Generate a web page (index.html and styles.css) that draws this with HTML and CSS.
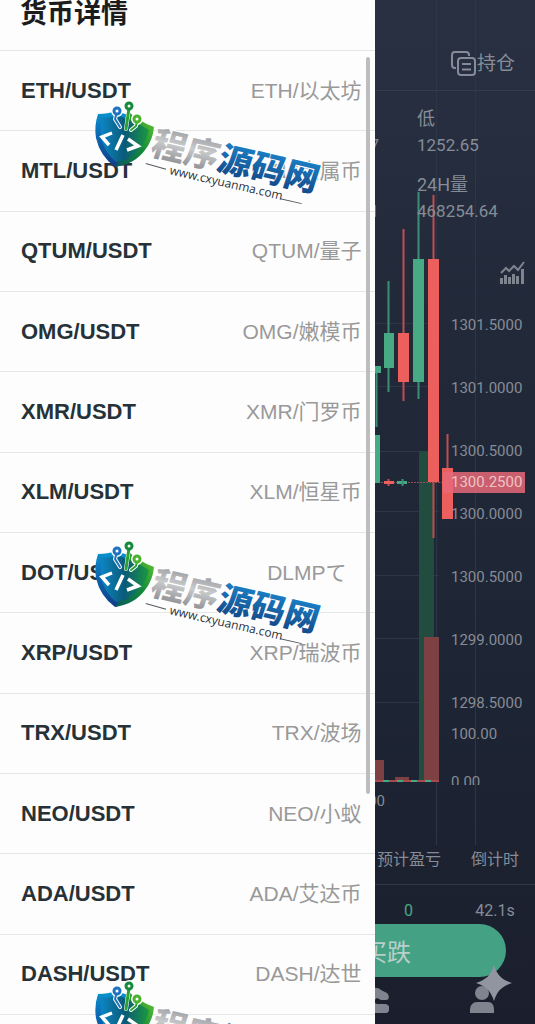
FILE: index.html
```html
<!DOCTYPE html>
<html lang="zh-CN">
<head>
    <meta charset="UTF-8">
    <meta name="viewport" content="width=device-width, initial-scale=1.0">
    <title>货币详情</title>
    <link rel="stylesheet" href="styles.css">
</head>
<body>
    <div class="app">
        <main class="trade">
            <!-- K线图 -->
            <svg class="kline" viewBox="375 0 160 850" width="160" height="850" aria-hidden="true">
                <g class="grid">
                    <path d="M436.5 0V845M475.5 0V845"/>
                    <path d="M375 323.5H439M375 386.5H439M375 451.5H439M375 511.5H439M375 575.5H439M375 638.5H439M375 702.5H439"/>
                </g>
                <rect class="vol-up" x="419" y="451" width="15" height="330"/>
                <rect class="vol-down" x="424" y="637" width="15" height="144"/>
                <rect class="vol-down" x="375" y="760" width="9" height="21"/>
                <rect class="vol-down" x="395" y="777" width="14" height="3"/>
                <path class="base" d="M375 781H439"/>
                <path class="base-down" d="M375 781H439"/>
                <path class="last" d="M375 482.5H443"/>
                <g class="up">
                    <path d="M376.5 366V427M388.5 281V392M418.5 192V399"/>
                    <rect x="370" y="366" width="11" height="7"/>
                    <rect x="370" y="435" width="10" height="48"/>
                    <rect x="384" y="333" width="10" height="35"/>
                    <rect x="413" y="259" width="11" height="123"/>
                    <rect x="397" y="481" width="10" height="3"/>
                    <path d="M402.5 479V486"/>
                </g>
                <g class="down">
                    <path d="M403.5 229V401M433.5 195V538M447.5 434V470M388.5 479V486"/>
                    <rect x="398" y="333" width="11" height="49"/>
                    <rect x="428" y="259" width="11" height="223"/>
                    <rect x="442" y="468" width="11" height="51"/>
                    <rect x="384" y="481" width="10" height="3"/>
                </g>
            </svg>

            <header class="trade-header">
                <button class="hold-btn" type="button">
                    <svg width="26" height="26" viewBox="0 0 26 26" aria-hidden="true">
                        <path d="M5 17H4a3 3 0 0 1-3-3V4a3 3 0 0 1 3-3h11a3 3 0 0 1 3 3v1"/>
                        <rect x="7" y="7" width="17" height="17" rx="3"/>
                        <path d="M11 13h9M11 18.500h9"/>
                    </svg>
                    <span>持仓</span>
                </button>
            </header>

            <dl class="stats">
                <div class="stat stat-left"><dt></dt><dd>7</dd></div>
                <div class="stat"><dt>低</dt><dd>1252.65</dd></div>
                <div class="stat stat-left"><dt></dt><dd>1</dd></div>
                <div class="stat"><dt>24H量</dt><dd>468254.64</dd></div>
            </dl>

            <section class="chart">
                <button class="indicator-btn" type="button" aria-label="指标">
                    <svg width="26" height="24" viewBox="0 0 26 24" aria-hidden="true">
                        <path class="line" d="M2 12l5-5 3 3 5-5 4 4 6-8"/>
                        <path class="bars" d="M2.500 23v-6M6.500 23v-9M10.500 23v-7M14.500 23v-10M18.500 23v-8M23.500 23V8"/>
                    </svg>
                </button>
                <ul class="axis">
                    <li>1301.5000</li>
                    <li>1301.0000</li>
                    <li>1300.5000</li>
                    <li>1300.0000</li>
                    <li>1300.5000</li>
                    <li>1299.0000</li>
                    <li>1298.5000</li>
                </ul>
                <ul class="axis-vol">
                    <li>100.00</li>
                    <li class="cut">0.00</li>
                </ul>
                <div class="price-tag">1300.2500</div>
                <div class="time">00</div>
            </section>

            <table class="orders">
                <thead>
                    <tr><th>预计盈亏</th><th class="count">倒计时</th></tr>
                </thead>
                <tbody>
                    <tr><td class="profit">0</td><td class="count">42.1s</td></tr>
                </tbody>
            </table>

            <div class="actions">
                <button class="sell-btn" type="button">买跌</button>
            </div>

            <nav class="tabbar">
                <a href="#" aria-label="资产">
                    <svg width="28" height="28" viewBox="0 0 28 28" aria-hidden="true">
                        <path d="M2 11L9 4c3-3 8-3 11 0l6 3c3 3 2 7-1 7h-5l-4-2-5 4H4z"/>
                        <path d="M1 18h7l4-2 4 2h8c6 0 6 9 0 9H1z"/>
                    </svg>
                </a>
                <a href="#" aria-label="我的">
                    <svg width="28" height="28" viewBox="0 0 28 28" aria-hidden="true">
                        <circle cx="14" cy="7" r="7"/>
                        <path d="M2 27v-3c0-5 3-8 7-8h11c4 0 6 3 6 8v3z"/>
                    </svg>
                </a>
            </nav>

            <svg class="sparkle" width="36" height="36" viewBox="0 0 36 36" aria-hidden="true">
                <path d="M18 0C21 10 26 15 36 18C26 21 21 26 18 36C15 26 10 21 0 18C10 15 15 10 18 0z"/>
            </svg>
        </main>

        <aside class="drawer">
            <h1>货币详情</h1>
            <ul class="coins">
                <li><b>ETH/USDT</b><span>ETH/以太坊</span></li>
                <li><b>MTL/USDT</b><span>MTL/金属币</span></li>
                <li><b>QTUM/USDT</b><span>QTUM/量子</span></li>
                <li><b>OMG/USDT</b><span>OMG/嫩模币</span></li>
                <li><b>XMR/USDT</b><span>XMR/门罗币</span></li>
                <li><b>XLM/USDT</b><span>XLM/恒星币</span></li>
                <li class="short"><b>DOT/USDT</b><span>DLMPて</span></li>
                <li><b>XRP/USDT</b><span>XRP/瑞波币</span></li>
                <li><b>TRX/USDT</b><span>TRX/波场</span></li>
                <li><b>NEO/USDT</b><span>NEO/小蚁</span></li>
                <li><b>ADA/USDT</b><span>ADA/艾达币</span></li>
                <li><b>DASH/USDT</b><span>DASH/达世</span></li>
            </ul>
            <div class="scrollbar"></div>
        </aside>

        <!-- 水印 -->
        <div class="marks">
            <svg class="mark" viewBox="0 0 240 110" width="240" height="110">
                <defs>
                    <linearGradient id="blue" x1="0" y1="0" x2="0" y2="1">
                        <stop offset="0" stop-color="#0a93cf"/>
                        <stop offset="0.500" stop-color="#0b63b0"/>
                        <stop offset="1" stop-color="#123c86"/>
                    </linearGradient>
                    <linearGradient id="green" x1="1" y1="0" x2="0" y2="1">
                        <stop offset="0" stop-color="#6acb2c"/>
                        <stop offset="0.500" stop-color="#128a3c"/>
                        <stop offset="1" stop-color="#0a5560"/>
                    </linearGradient>
                    <linearGradient id="inner" x1="0" y1="0" x2="1" y2="0">
                        <stop offset="0" stop-color="#0c86c4"/>
                        <stop offset="0.500" stop-color="#0a5a78"/>
                        <stop offset="1" stop-color="#1b9a3e"/>
                    </linearGradient>
                    <linearGradient id="silver" x1="0" y1="0" x2="0" y2="1">
                        <stop offset="0" stop-color="#85878b"/>
                        <stop offset="0.500" stop-color="#c9cacc"/>
                        <stop offset="1" stop-color="#7e8084"/>
                    </linearGradient>
                    <linearGradient id="navy" x1="0" y1="0" x2="0" y2="1">
                        <stop offset="0.200" stop-color="#1b80c6"/>
                        <stop offset="1" stop-color="#12407f"/>
                    </linearGradient>
                    <g id="logo">
                        <path fill="url(#blue)" d="M9 16Q19 16 27 13L42 18L38 62Q31 68 26 69Q11 58 7 40Q5 28 9 16z"/>
                        <path fill="url(#green)" d="M40 14Q49 23 65 29Q64 42 56 52Q46 66 26 69Q36 54 40 14z"/>
                        <path fill="url(#inner)" d="M13 20Q22 20 28 17L48 25L60 32Q58 43 51 51Q42 62 27 64Q14 53 12 38Q11 28 13 20z"/>
                        <g fill="none" stroke-linecap="round" stroke-linejoin="round">
                            <path stroke="#fff" stroke-width="4" d="M28 14l-2 7 5 8M40 10L37 31M48 23l-1 5-5 4"/>
                            <g fill="#fff" stroke="#fff" stroke-width="6">
                                <circle cx="28" cy="13" r="3"/><circle cx="40" cy="8" r="3"/><circle cx="48" cy="21" r="3"/>
                            </g>
                            <path stroke="#1c72bd" stroke-width="2" d="M28 14l-2 7 5 8"/>
                            <path stroke="#2aa236" stroke-width="3" d="M40 10L37 31"/>
                            <path stroke="#2aa236" stroke-width="2" d="M48 23l-1 5-5 4"/>
                            <g fill="#fff" stroke-width="3">
                                <circle cx="28" cy="13" r="3" stroke="#1c72bd"/>
                                <circle cx="40" cy="8" r="3" stroke="#168a3c"/>
                                <circle cx="48" cy="21" r="3" stroke="#4cb22e"/>
                            </g>
                            <path stroke="#fff" stroke-width="3.500" stroke-linecap="butt" stroke-linejoin="miter" d="M23 35l-10 4 7 8M34 37l-7 15M39 41l10 7-11 4"/>
                        </g>
                        <g transform="translate(60 56) rotate(13)">
                            <g class="mark-name" transform="skewX(-5)">
                                <text fill="url(#silver)">程序</text>
                                <text x="68" fill="url(#navy)">源码网</text>
                            </g>
                            <path class="mark-rule" d="M-1 10L20 11M138 14h22"/>
                            <text class="mark-url" x="24" y="15">www.cxyuanma.com</text>
                        </g>
                    </g>
                </defs>
                <use href="#logo"/>
            </svg>
            <svg class="mark" viewBox="0 0 240 110" width="240" height="110"><use href="#logo"/></svg>
            <svg class="mark" viewBox="0 0 240 110" width="240" height="110"><use href="#logo"/></svg>
        </div>
    </div>
</body>
</html>
```

FILE: styles.css
```css
* {
    box-sizing: border-box;
}
body {
    margin: 0;
    font-family: "Liberation Sans", "Noto Sans CJK SC", sans-serif;
    background-color: #1d2331;
}
ul, dl, dd {
    margin: 0;
    padding: 0;
    list-style: none;
}
button {
    border: none;
    padding: 0;
    background: none;
    font-family: inherit;
    cursor: pointer;
}
.app {
    position: relative;
    height: 100vh;
    overflow: hidden;
}

/* 交易页 */
.trade {
    position: relative;
    min-height: 100%;
    color: #868c97;
    font-family: Roboto, "Noto Sans CJK SC", sans-serif;
    background: linear-gradient(#283042, #222a3a 30%, #1d2433 70%, #1b1f2d);
}
.kline {
    position: absolute;
    top: 0;
    right: 0;
}
.grid {
    fill: none;
    stroke: #2d3646;
}
.up {
    fill: #48a985;
    stroke: #3c8f74;
}
.down {
    fill: #ec5f5c;
    stroke: #c04e50;
}
.up rect,
.down rect {
    stroke: none;
}
.up path,
.down path {
    stroke-width: 2;
}
.vol-up {
    fill: #234c40;
}
.vol-down {
    fill: #7d4144;
}
.base {
    stroke: #48a985;
    stroke-width: 2;
}
.base-down {
    stroke: #a84a4c;
    stroke-width: 2;
    stroke-dasharray: 8 6;
}
.last {
    stroke: #8a5058;
    stroke-dasharray: 2 1;
}
.trade-header {
    position: relative;
    display: flex;
    justify-content: flex-end;
    padding: 50px 20px 13px;
    border-bottom: 1px solid #343c4c;
}
.hold-btn {
    display: flex;
    align-items: center;
    color: #868c97;
    font-size: 19px;
    line-height: 27px;
}
.hold-btn svg {
    fill: none;
    stroke: #868c97;
    stroke-width: 2;
}
.stats {
    position: relative;
    display: grid;
    grid-template-columns: 1fr 118px;
    gap: 14px 38px;
    padding-top: 15px;
    font-size: 17px;
    line-height: 26px;
}
.stat dt {
    min-height: 26px;
    font-size: 18px;
}
.stat-left {
    text-align: right;
}
.chart {
    position: relative;
    padding-top: 37px;
    font-size: 15px;
    line-height: 20px;
}
.indicator-btn {
    display: block;
    margin: 0 10px 0 auto;
    height: 24px;
}
.indicator-btn svg {
    display: block;
    fill: none;
    stroke: #7f858f;
}
.indicator-btn .line {
    stroke-width: 2;
}
.indicator-btn .bars {
    stroke-width: 3;
}
.axis,
.axis-vol {
    width: 84px;
    margin-left: auto;
}
.axis {
    display: flex;
    flex-direction: column;
    gap: 43px;
    padding-top: 30px;
}
.axis-vol {
    padding-top: 11px;
}
.axis-vol .cut {
    height: 11px;
    margin-top: 30px;
    line-height: 16px;
    overflow: hidden;
}
.price-tag {
    position: absolute;
    top: 248px;
    right: 10px;
    width: 82px;
    padding-left: 8px;
    line-height: 21px;
    color: #efc3c4;
    background-color: rgba(232, 104, 120, 0.85);
}
.time {
    padding: 6px 150px 0 0;
    text-align: right;
}
.orders {
    position: relative;
    width: 100%;
    margin-top: 32px;
    border-collapse: collapse;
    font-size: 16px;
    line-height: 26px;
    text-align: right;
}
.orders th {
    padding: 4px 14px 11px 0;
    border-bottom: 1px solid #303848;
    font-weight: normal;
}
.orders td {
    padding: 13px 14px 0 0;
}
.orders .count {
    width: 80px;
    padding-left: 0;
    padding-right: 0;
    text-align: center;
}
.orders .profit {
    padding-right: 42px;
    color: #48a985;
}
.actions {
    display: flex;
    justify-content: flex-end;
    padding-right: 29px;
}
.sell-btn {
    width: 47%;
    height: 53px;
    border-radius: 27px;
    color: #b9cfc9;
    font-size: 24px;
    background-color: #45a184;
}
.tabbar {
    display: flex;
    justify-content: flex-end;
    padding-top: 9px;
}
.tabbar a {
    display: flex;
    justify-content: center;
    width: 20%;
}
.tabbar svg {
    fill: #7f848e;
}
.sparkle {
    position: absolute;
    right: 23px;
    bottom: 23px;
    fill: #9095a0;
}

/* 左侧币种抽屉 */
.drawer {
    position: absolute;
    top: 0;
    left: 0;
    display: flex;
    flex-direction: column;
    width: 70%;
    height: 100%;
    background-color: #fdfdfd;
}
.drawer h1 {
    margin: 0;
    padding: 0 20px 22px;
    border-bottom: 1px solid #e6e6e6;
    color: #1c1c1c;
    font-size: 27px;
    line-height: 28px;
}
.coins {
    flex: 1;
    display: flex;
    flex-direction: column;
    padding-bottom: 9px;
}
.coins li {
    flex: 1;
    display: flex;
    align-items: center;
    justify-content: space-between;
    padding: 0 13px 0 21px;
    border-bottom: 1px solid #e6e6e6;
    line-height: 24px;
}
.coins b {
    color: #263238;
    font-size: 22px;
}
.coins span {
    color: #999;
    font-size: 21px;
}
.coins .short {
    padding-right: 28px;
}
.scrollbar {
    position: absolute;
    top: 57px;
    right: 5px;
    width: 4px;
    height: 72%;
    border-radius: 2px;
    background-color: #bdbdbd;
}

/* 水印 */
.marks {
    position: absolute;
    top: 98px;
    left: 89px;
    display: flex;
    flex-direction: column;
    gap: 330px;
    pointer-events: none;
}
.mark {
    display: block;
    flex-shrink: 0;
    overflow: visible;
}
.mark-name {
    font-family: "Noto Sans CJK SC", sans-serif;
    font-size: 34px;
    font-weight: 900;
    paint-order: stroke;
    stroke: #fff;
    stroke-width: 2px;
}
.mark-url {
    font-family: "Open Sans", sans-serif;
    font-size: 12px;
    fill: #2b333d;
}
.mark-rule {
    stroke: #55595f;
}
```
